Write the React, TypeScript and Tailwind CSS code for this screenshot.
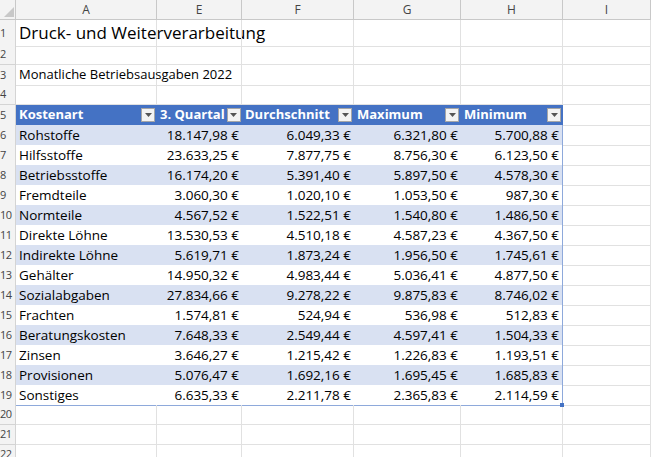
import React from 'react';

const cols = 'grid grid-cols-[16px_141px_85px_112px_107px_102px_1fr]';

const data: [string, string, string, string, string][] = [
  ['Rohstoffe', '18.147,98 €', '6.049,33 €', '6.321,80 €', '5.700,88 €'],
  ['Hilfsstoffe', '23.633,25 €', '7.877,75 €', '8.756,30 €', '6.123,50 €'],
  ['Betriebsstoffe', '16.174,20 €', '5.391,40 €', '5.897,50 €', '4.578,30 €'],
  ['Fremdteile', '3.060,30 €', '1.020,10 €', '1.053,50 €', '987,30 €'],
  ['Normteile', '4.567,52 €', '1.522,51 €', '1.540,80 €', '1.486,50 €'],
  ['Direkte Löhne', '13.530,53 €', '4.510,18 €', '4.587,23 €', '4.367,50 €'],
  ['Indirekte Löhne', '5.619,71 €', '1.873,24 €', '1.956,50 €', '1.745,61 €'],
  ['Gehälter', '14.950,32 €', '4.983,44 €', '5.036,41 €', '4.877,50 €'],
  ['Sozialabgaben', '27.834,66 €', '9.278,22 €', '9.875,83 €', '8.746,02 €'],
  ['Frachten', '1.574,81 €', '524,94 €', '536,98 €', '512,83 €'],
  ['Beratungskosten', '7.648,33 €', '2.549,44 €', '4.597,41 €', '1.504,33 €'],
  ['Zinsen', '3.646,27 €', '1.215,42 €', '1.226,83 €', '1.193,51 €'],
  ['Provisionen', '5.076,47 €', '1.692,16 €', '1.695,45 €', '1.685,83 €'],
  ['Sonstiges', '6.635,33 €', '2.211,78 €', '2.365,83 €', '2.114,59 €'],
];

const Num = ({ n }: { n: number }) => (
  <div className="border-b border-r border-[#d4d4d4] bg-[#f3f3f3] text-[#444] text-[11px] tracking-[-0.5px] flex items-center overflow-hidden whitespace-nowrap">{n}</div>
);
const Cell = ({ children, cls = '' }: { children?: React.ReactNode; cls?: string }) => (
  <div className={`border-b border-r border-[#e1e1e1] flex items-center px-[3px] whitespace-nowrap overflow-visible ${cls}`}>{children}</div>
);
const Drop = () => (
  <span className="ml-auto w-[14px] h-[14px] bg-[#f3f3f3] border border-[#a6a6a6] flex items-center justify-center shrink-0">
    <svg width="7" height="4" viewBox="0 0 7 4"><path d="M0 0h7L3.5 4z" fill="#555" /></svg>
  </span>
);

export default function App() {
  return (
    <div className="w-[651px] h-[457px] overflow-hidden bg-white text-[13.5px] text-black" style={{ fontFamily: '"Open Sans", sans-serif' }}>
      <div className={`${cols} h-[20px] bg-[#f3f3f3] text-[#444] text-[12px]`}>
        <div className="border-b border-r border-[#c8c8c8] relative">
          <svg className="absolute right-[1px] bottom-[2px]" width="10" height="10"><path d="M10 0V10H0z" fill="#c8c8c8" /></svg>
        </div>
        {['A', 'E', 'F', 'G', 'H', 'I'].map((c) => (
          <div key={c} className="border-b border-r border-[#c8c8c8] flex items-center justify-center">{c}</div>
        ))}
      </div>
      <div className={`${cols} h-[25px]`}>
        <Num n={1} />
        <Cell cls="text-[17px]">Druck- und Weiterverarbeitung</Cell>
        <Cell /><Cell /><Cell /><Cell /><Cell />
      </div>
      {[2, 3, 4].map((n) => (
        <div key={n} className={`${cols} h-[20px]`}>
          <Num n={n} />
          <Cell cls="text-[13px]">{n === 3 ? 'Monatliche Betriebsausgaben 2022' : ''}</Cell>
          <Cell /><Cell /><Cell /><Cell /><Cell />
        </div>
      ))}
      <div className={`${cols} h-[20px]`}>
        <Num n={5} />
        {['Kostenart', '3. Quartal', 'Durchschnitt', 'Maximum', 'Minimum'].map((h) => (
          <div key={h} className="bg-[#4472c4] text-white font-bold text-[13px] whitespace-nowrap flex items-center pl-[3px] pr-[2px] gap-[2px] border-b border-[#8ea9db]">
            {h}
            <Drop />
          </div>
        ))}
        <Cell />
      </div>
      {data.map((r, i) => (
        <div key={r[0]} className={`${cols} h-[20px]`}>
          <Num n={i + 6} />
          {r.map((v, j) => (
            <div
              key={j}
              className={`flex items-center px-[3px] whitespace-nowrap border-b border-[#8ea9db] ${j > 0 ? 'justify-end' : ''} ${i % 2 === 0 ? 'bg-[#d9e1f2]' : 'bg-white'} ${j === 4 ? 'border-r relative' : ''}`}
            >
              {v}
              {j === 4 && i === data.length - 1 && <span className="absolute right-[-2px] bottom-[-2px] w-[4px] h-[4px] bg-[#4472c4]" />}
            </div>
          ))}
          <Cell />
        </div>
      ))}
      {[20, 21, 22].map((n) => (
        <div key={n} className={`${cols} h-[20px]`}>
          <Num n={n} />
          <Cell /><Cell /><Cell /><Cell /><Cell /><Cell />
        </div>
      ))}
    </div>
  );
}
